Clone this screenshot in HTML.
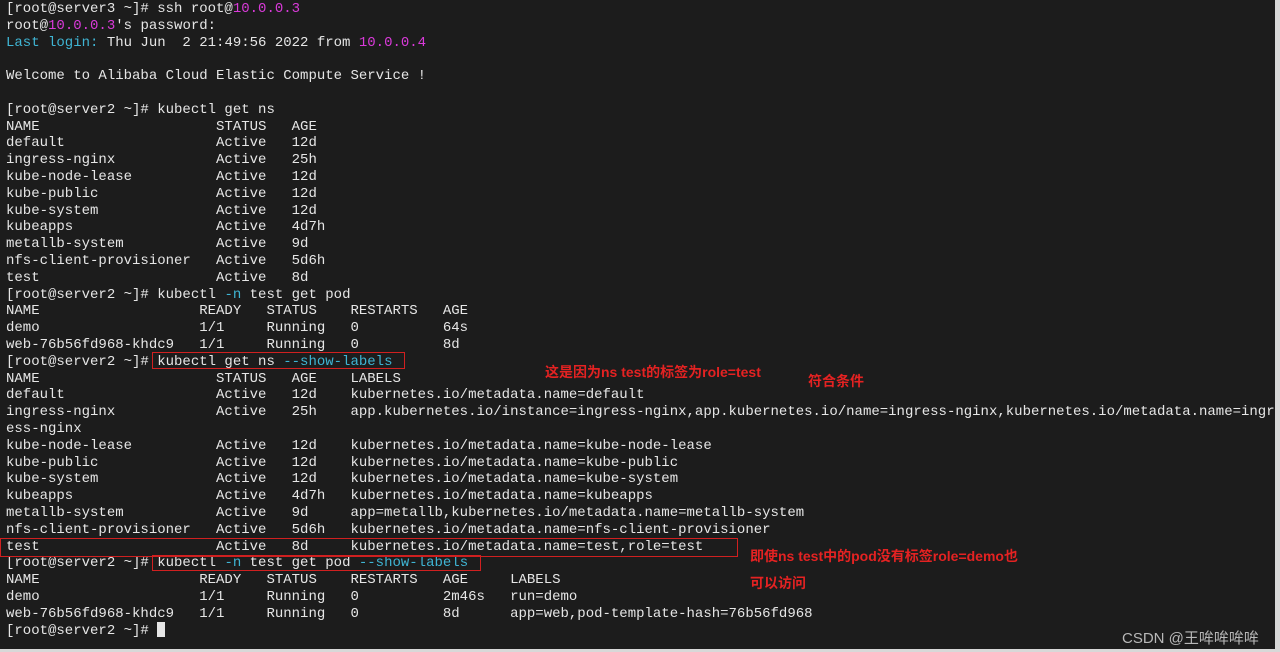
<!DOCTYPE html>
<html><head><meta charset="utf-8"><style>
html,body{margin:0;padding:0;background:#1c1c1c;width:1280px;height:652px;overflow:hidden;position:relative}
pre{position:absolute;left:6px;top:1px;margin:0;font-family:"Liberation Mono",monospace;font-size:14px;line-height:16.8px;color:#e6e6e6;white-space:pre}
.m{color:#d93ad9}.c{color:#3fb5d4}
.box{position:absolute;border:1px solid #d02020}
.ann{position:absolute;color:#e42222;font-family:"Liberation Sans","Noto Sans CJK SC",sans-serif;font-weight:bold;font-size:14px;line-height:16px}
.wm{position:absolute;left:1122px;top:627px;color:#b8b8b8;font-family:"Liberation Sans","Noto Sans CJK SC",sans-serif;font-size:15px}
.sb{position:absolute;left:1275px;top:0;width:5px;height:652px;background:#d8d8d8}
.bb{position:absolute;left:0;top:649px;width:1280px;height:3px;background:#d8d8d8}
.cur{display:inline-block;width:8px;height:15px;background:#e6e6e6;vertical-align:-3px}
</style></head><body>
<pre>[root@server3 ~]# ssh root@<span class="m">10.0.0.3</span>
root@<span class="m">10.0.0.3</span>'s password:
<span class="c">Last login:</span> Thu Jun  2 21:49:56 2022 from <span class="m">10.0.0.4</span>

Welcome to Alibaba Cloud Elastic Compute Service !

[root@server2 ~]# kubectl get ns
NAME                     STATUS   AGE
default                  Active   12d
ingress-nginx            Active   25h
kube-node-lease          Active   12d
kube-public              Active   12d
kube-system              Active   12d
kubeapps                 Active   4d7h
metallb-system           Active   9d
nfs-client-provisioner   Active   5d6h
test                     Active   8d
[root@server2 ~]# kubectl <span class="c">-n</span> test get pod
NAME                   READY   STATUS    RESTARTS   AGE
demo                   1/1     Running   0          64s
web-76b56fd968-khdc9   1/1     Running   0          8d
[root@server2 ~]# kubectl get ns <span class="c">--show-labels</span>
NAME                     STATUS   AGE    LABELS
default                  Active   12d    kubernetes.io/metadata.name=default
ingress-nginx            Active   25h    app.kubernetes.io/instance=ingress-nginx,app.kubernetes.io/name=ingress-nginx,kubernetes.io/metadata.name=ingr
ess-nginx
kube-node-lease          Active   12d    kubernetes.io/metadata.name=kube-node-lease
kube-public              Active   12d    kubernetes.io/metadata.name=kube-public
kube-system              Active   12d    kubernetes.io/metadata.name=kube-system
kubeapps                 Active   4d7h   kubernetes.io/metadata.name=kubeapps
metallb-system           Active   9d     app=metallb,kubernetes.io/metadata.name=metallb-system
nfs-client-provisioner   Active   5d6h   kubernetes.io/metadata.name=nfs-client-provisioner
test                     Active   8d     kubernetes.io/metadata.name=test,role=test
[root@server2 ~]# kubectl <span class="c">-n</span> test get pod <span class="c">--show-labels</span>
NAME                   READY   STATUS    RESTARTS   AGE     LABELS
demo                   1/1     Running   0          2m46s   run=demo
web-76b56fd968-khdc9   1/1     Running   0          8d      app=web,pod-template-hash=76b56fd968
[root@server2 ~]# <span class="cur"></span></pre>
<div class="box" style="left:152px;top:352px;width:251px;height:15px"></div>
<div class="box" style="left:0px;top:538px;width:736px;height:17px"></div>
<div class="box" style="left:152px;top:555px;width:327px;height:14px"></div>
<div class="ann" style="left:545px;top:364px">这是因为ns test的标签为role=test</div>
<div class="ann" style="left:808px;top:373px">符合条件</div>
<div class="ann" style="left:750px;top:548px">即使ns test中的pod没有标签role=demo也</div>
<div class="ann" style="left:750px;top:575px">可以访问</div>
<div class="wm">CSDN @王哞哞哞哞</div>
<div class="sb"></div><div class="bb"></div>
</body></html>
